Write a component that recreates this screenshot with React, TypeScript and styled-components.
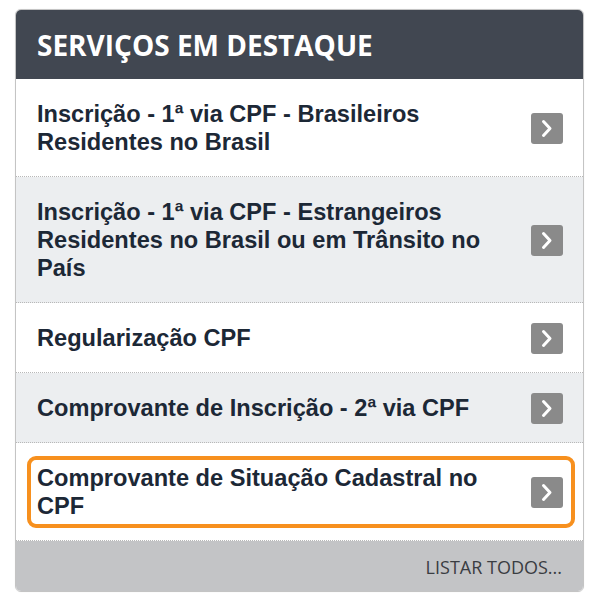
import React from 'react';
import styled, { createGlobalStyle } from 'styled-components';

const GlobalStyle = createGlobalStyle`
  body {
    margin: 0;
    background: #fff;
  }
`;

const Page = styled.div`
  padding: 9px 16px 8px 15px;
`;

const Panel = styled.section`
  border: 1px solid #c4c4c4;
  border-radius: 6px;
  overflow: hidden;
  box-shadow: 0 0 1px rgba(0, 0, 0, 0.15);
`;

const Header = styled.header`
  background-color: #414751;
  height: 69px;
  display: flex;
  align-items: center;
  padding: 0 21px;
`;

const Title = styled.h2`
  margin: 0;
  color: #fff;
  font-family: 'Open Sans', sans-serif;
  font-weight: 700;
  font-size: 28px;
`;

const Item = styled.div<{ $shaded?: boolean }>`
  background-color: ${(p) => (p.$shaded ? '#eceef0' : '#fff')};
  padding: 13px 8px 12px 11px;
  border-bottom: 1px dotted #b8b8b8;
`;

const ItemInner = styled.a<{ $focused?: boolean }>`
  display: flex;
  align-items: center;
  justify-content: space-between;
  gap: 16px;
  padding: 4px 8px 4px 6px;
  border: 4px solid ${(p) => (p.$focused ? '#f7901e' : 'transparent')};
  border-radius: 9px;
  text-decoration: none;
  cursor: pointer;
`;

const ItemText = styled.span`
  font-family: 'Liberation Sans', Arial, sans-serif;
  font-weight: 700;
  font-size: 23.6px;
  line-height: 28px;
  color: #1c2836;
`;

const ArrowButton = styled.span`
  flex: none;
  width: 32px;
  height: 31px;
  margin: -2px 0;
  border-radius: 3px;
  background-color: #8a8a8a;
  display: flex;
  align-items: center;
  justify-content: center;
`;

const Footer = styled.footer`
  background-color: #c3c4c6;
  height: 50px;
  display: flex;
  align-items: center;
  justify-content: flex-end;
  padding: 0 21px 0 0;
`;

const ListAll = styled.a`
  font-family: 'Open Sans', sans-serif;
  font-size: 18px;
  color: #3a3d42;
  text-decoration: none;
  margin-top: 2px;
`;

const Chevron = () => (
  <svg width="14" height="19" viewBox="0 0 14 19">
    <path d="M3.5 2.5 L10 9.5 L3.5 16.5" fill="none" stroke="#fff" strokeWidth="3" strokeLinecap="round" strokeLinejoin="round" />
  </svg>
);

const services = [
  { label: 'Inscrição - 1ª via CPF - Brasileiros Residentes no Brasil' },
  { label: 'Inscrição - 1ª via CPF - Estrangeiros Residentes no Brasil ou em Trânsito no País' },
  { label: 'Regularização CPF' },
  { label: 'Comprovante de Inscrição - 2ª via CPF' },
  { label: 'Comprovante de Situação Cadastral no CPF', focused: true },
];

const App: React.FC = () => {
  return (
    <Page>
      <GlobalStyle />
      <Panel>
        <Header>
          <Title>SERVIÇOS EM DESTAQUE</Title>
        </Header>
        {services.map((s, i) => (
          <Item key={s.label} $shaded={i % 2 === 1}>
            <ItemInner $focused={s.focused}>
              <ItemText>{s.label}</ItemText>
              <ArrowButton>
                <Chevron />
              </ArrowButton>
            </ItemInner>
          </Item>
        ))}
        <Footer>
          <ListAll>LISTAR TODOS...</ListAll>
        </Footer>
      </Panel>
    </Page>
  );
};

export default App;
